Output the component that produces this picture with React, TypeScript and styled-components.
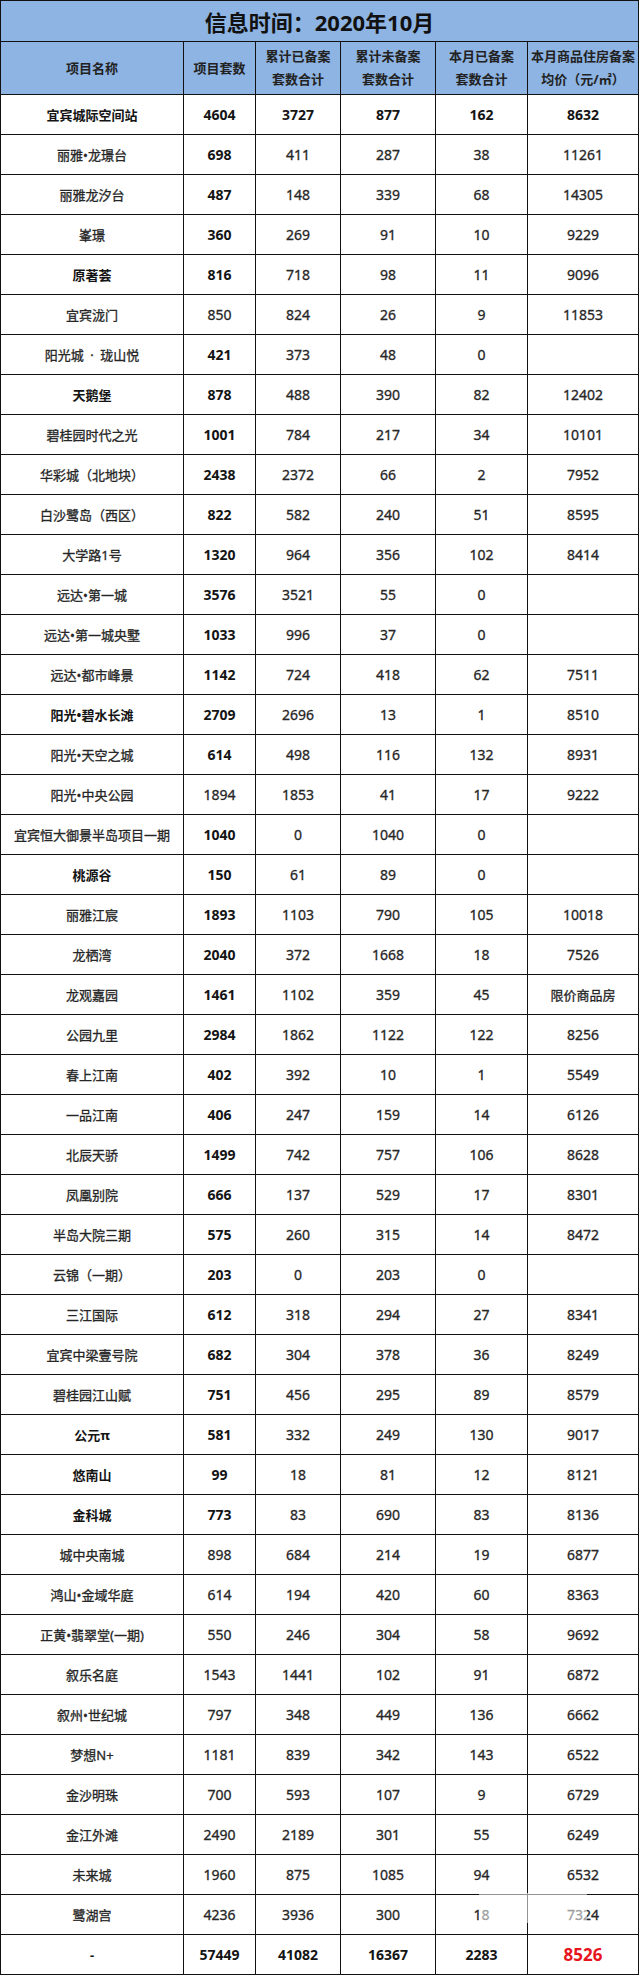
import React from "react";
import styled, { createGlobalStyle } from "styled-components";

const GlobalStyle = createGlobalStyle`
  html, body { margin: 0; padding: 0; background: #ffffff; }
  body { font-family: "Noto Sans", "Noto Sans CJK SC", sans-serif; }
`;

const Sheet = styled.div`
  position: relative;
  width: 639px;
  box-sizing: border-box;
  display: grid;
  grid-template-columns: 183px 72px 85px 95px 92px 111px;
  border-left: 1px solid #111;
  border-top: 1px solid #111;
  color: #1e1e1e;
  font-family: "Noto Sans", "Noto Sans CJK SC", sans-serif;
`;

const Title = styled.div`
  grid-column: 1 / -1;
  height: 41px;
  box-sizing: border-box;
  border-right: 1px solid #111;
  border-bottom: 1px solid #111;
  background: #8db4e2;
  display: flex;
  align-items: center;
  justify-content: center;
  font-size: 22px;
  font-weight: 700;
  color: #111;
`;

const Head = styled.div`
  height: 53px;
  box-sizing: border-box;
  border-right: 1px solid #111;
  border-bottom: 1px solid #111;
  background: #8db4e2;
  display: flex;
  flex-direction: column;
  align-items: center;
  justify-content: center;
  font-size: 13px;
  font-weight: 700;
  line-height: 23px;
  color: #222;
  text-align: center;
  white-space: nowrap;
`;

const Cell = styled.div<{ $bold?: boolean; $red?: boolean; $num?: boolean }>`
  height: 40px;
  box-sizing: border-box;
  border-right: 1px solid #111;
  border-bottom: 1px solid #111;
  display: flex;
  align-items: center;
  justify-content: center;
  white-space: pre;
  font-size: ${(p) => (p.$red ? "17px" : p.$num ? "14px" : "13px")};
  font-weight: ${(p) => (p.$bold || p.$red ? 700 : 400)};
  -webkit-text-stroke: ${(p) => (p.$bold || p.$red ? "0" : "0.3px")};
  color: ${(p) => (p.$red ? "#e8141b" : p.$bold ? "#141414" : "#262626")};
`;

const Watermark = styled.div`
  position: absolute;
  left: 478px;
  top: 1892px;
  width: 108px;
  height: 30px;
  background: rgba(255, 255, 255, 0.55);
  pointer-events: none;
`;

type Row = {
  name: string;
  v: (string | number)[];
  nb?: boolean;
  cb?: boolean;
  ab?: boolean;
};

const rows: Row[] = [
  { name: "宜宾城际空间站", v: [4604, 3727, 877, 162, 8632], ab: true },
  { name: "丽雅•龙璟台", v: [698, 411, 287, 38, 11261], cb: true },
  { name: "丽雅龙汐台", v: [487, 148, 339, 68, 14305], cb: true },
  { name: "峯璟", v: [360, 269, 91, 10, 9229], cb: true },
  { name: "原著荟", v: [816, 718, 98, 11, 9096], nb: true, cb: true },
  { name: "宜宾泷门", v: [850, 824, 26, 9, 11853] },
  { name: "阳光城\u2002·\u2002珑山悦", v: [421, 373, 48, 0, ""], cb: true },
  { name: "天鹅堡", v: [878, 488, 390, 82, 12402], nb: true, cb: true },
  { name: "碧桂园时代之光", v: [1001, 784, 217, 34, 10101], cb: true },
  { name: "华彩城（北地块）", v: [2438, 2372, 66, 2, 7952], cb: true },
  { name: "白沙鹭岛（西区）", v: [822, 582, 240, 51, 8595], cb: true },
  { name: "大学路1号", v: [1320, 964, 356, 102, 8414], cb: true },
  { name: "远达•第一城", v: [3576, 3521, 55, 0, ""], cb: true },
  { name: "远达•第一城央墅", v: [1033, 996, 37, 0, ""], cb: true },
  { name: "远达•都市峰景", v: [1142, 724, 418, 62, 7511], cb: true },
  { name: "阳光•碧水长滩", v: [2709, 2696, 13, 1, 8510], nb: true, cb: true },
  { name: "阳光•天空之城", v: [614, 498, 116, 132, 8931], cb: true },
  { name: "阳光•中央公园", v: [1894, 1853, 41, 17, 9222] },
  { name: "宜宾恒大御景半岛项目一期", v: [1040, 0, 1040, 0, ""], cb: true },
  { name: "桃源谷", v: [150, 61, 89, 0, ""], nb: true, cb: true },
  { name: "丽雅江宸", v: [1893, 1103, 790, 105, 10018], cb: true },
  { name: "龙栖湾", v: [2040, 372, 1668, 18, 7526], cb: true },
  { name: "龙观嘉园", v: [1461, 1102, 359, 45, "限价商品房"], cb: true },
  { name: "公园九里", v: [2984, 1862, 1122, 122, 8256], cb: true },
  { name: "春上江南", v: [402, 392, 10, 1, 5549], cb: true },
  { name: "一品江南", v: [406, 247, 159, 14, 6126], cb: true },
  { name: "北辰天骄", v: [1499, 742, 757, 106, 8628], cb: true },
  { name: "凤凰别院", v: [666, 137, 529, 17, 8301], cb: true },
  { name: "半岛大院三期", v: [575, 260, 315, 14, 8472], cb: true },
  { name: "云锦（一期）", v: [203, 0, 203, 0, ""], cb: true },
  { name: "三江国际", v: [612, 318, 294, 27, 8341], cb: true },
  { name: "宜宾中梁壹号院", v: [682, 304, 378, 36, 8249], cb: true },
  { name: "碧桂园江山赋", v: [751, 456, 295, 89, 8579], cb: true },
  { name: "公元π", v: [581, 332, 249, 130, 9017], nb: true, cb: true },
  { name: "悠南山", v: [99, 18, 81, 12, 8121], nb: true, cb: true },
  { name: "金科城", v: [773, 83, 690, 83, 8136], nb: true, cb: true },
  { name: "城中央南城", v: [898, 684, 214, 19, 6877] },
  { name: "鸿山•金域华庭", v: [614, 194, 420, 60, 8363] },
  { name: "正黄•翡翠堂(一期)", v: [550, 246, 304, 58, 9692] },
  { name: "叙乐名庭", v: [1543, 1441, 102, 91, 6872] },
  { name: "叙州•世纪城", v: [797, 348, 449, 136, 6662] },
  { name: "梦想N+", v: [1181, 839, 342, 143, 6522] },
  { name: "金沙明珠", v: [700, 593, 107, 9, 6729] },
  { name: "金江外滩", v: [2490, 2189, 301, 55, 6249] },
  { name: "未来城", v: [1960, 875, 1085, 94, 6532] },
  { name: "鹭湖宫", v: [4236, 3936, 300, 18, 7324] },
];

const headers: string[][] = [
  ["项目名称"],
  ["项目套数"],
  ["累计已备案", "套数合计"],
  ["累计未备案", "套数合计"],
  ["本月已备案", "套数合计"],
  ["本月商品住房备案", "均价（元/㎡）"],
];

export default function App() {
  return (
    <>
      <GlobalStyle />
      <Sheet>
        <Title>信息时间：2020年10月</Title>
        {headers.map((lines, i) => (
          <Head key={`h${i}`}>
            {lines.map((l) => (
              <span key={l}>{l}</span>
            ))}
          </Head>
        ))}
        {rows.map((r, ri) => (
          <React.Fragment key={`r${ri}`}>
            <Cell $bold={r.ab || r.nb}>{r.name}</Cell>
            {r.v.map((val, ci) => (
              <Cell
                key={ci}
                $num={typeof val === "number"}
                $bold={r.ab || (ci === 0 && r.cb)}
              >
                {val}
              </Cell>
            ))}
          </React.Fragment>
        ))}
        <Cell $bold>-</Cell>
        <Cell $bold $num>57449</Cell>
        <Cell $bold $num>41082</Cell>
        <Cell $bold $num>16367</Cell>
        <Cell $bold $num>2283</Cell>
        <Cell $red>8526</Cell>
        <Watermark />
      </Sheet>
    </>
  );
}
